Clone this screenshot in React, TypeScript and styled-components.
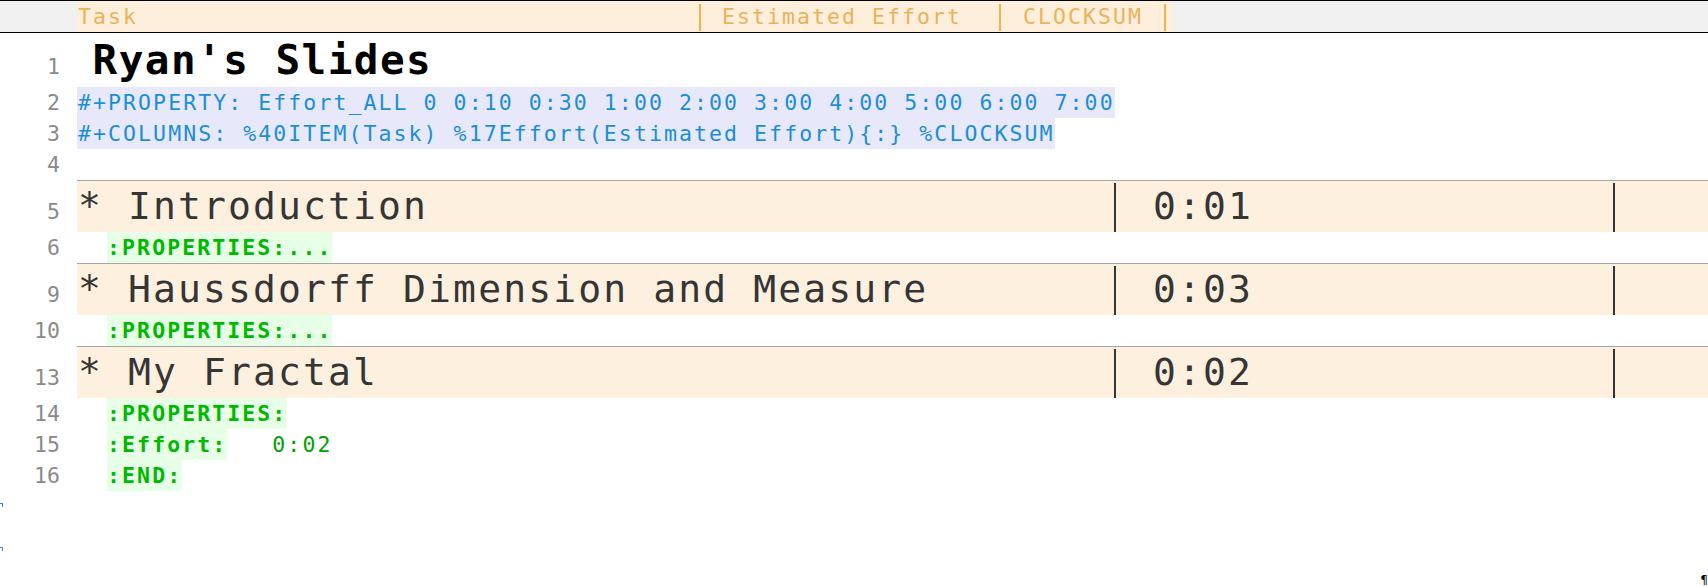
import React from "react";
import styled, { createGlobalStyle } from "styled-components";

const GlobalStyle = createGlobalStyle`
  html, body {
    margin: 0;
    padding: 0;
    background: #ffffff;
  }
  body {
    overflow: hidden;
    font-family: "DejaVu Sans Mono", "Liberation Mono", monospace;
  }
`;

const Page = styled.main`
  position: relative;
  width: 1708px;
  height: 586px;
  overflow: hidden;
  background: #ffffff;
`;

const HeaderBar = styled.header`
  display: flex;
  height: 31px;
  border-top: 1px solid #000;
  border-bottom: 1px solid #000;
  background: #f0f0f0;
  font-size: 21.5px;
  letter-spacing: 2.05px;
  line-height: 31px;
  color: #ebb25a;
`;

const HeaderGutter = styled.div`
  width: 77px;
  flex-shrink: 0;
`;

const HeaderCell = styled.div<{ $width: number; $pad: number }>`
  width: ${({ $width }) => $width}px;
  padding-left: ${({ $pad }) => $pad}px;
  box-sizing: border-box;
  flex-shrink: 0;
  background: #fdefdc;
  white-space: pre;
  overflow: hidden;
`;

const HeaderSep = styled.span`
  width: 2px;
  flex-shrink: 0;
  border-top: 3px solid #fdefdc;
  border-bottom: 1px solid #fdefdc;
  background: #f0b24e;
  background-clip: padding-box;
`;

const Line = styled.div`
  display: flex;
  align-items: baseline;
`;

const Num = styled.span`
  width: 77px;
  padding-right: 17px;
  box-sizing: border-box;
  flex-shrink: 0;
  text-align: right;
  font-size: 21.5px;
  line-height: 31px;
  color: #8a8a8a;
`;

const Body = styled.div`
  font-size: 21.5px;
  letter-spacing: 2.08px;
  line-height: 31px;
  white-space: pre;
  color: #333;
`;

const Title = styled.div`
  padding-left: 15.5px;
  font-size: 41px;
  font-weight: bold;
  letter-spacing: 1.45px;
  line-height: 54px;
  color: #000;
`;

const Keyword = styled.span`
  display: inline-block;
  padding-left: 1px;
  background: #e8e8fb;
  color: #1b8ed6;
`;

const Drawer = styled.span`
  display: inline-block;
  background: #e6ffe6;
  color: #00b800;
  font-weight: bold;
`;

const DrawerValue = styled.span`
  color: #00a000;
`;

const HeadBody = styled.div`
  flex: 1;
  display: flex;
  border-top: 1px solid #a6a6a6;
  background: #fdf0df;
  font-size: 38px;
  letter-spacing: 2.13px;
  line-height: 51px;
  color: #353535;
  white-space: pre;
`;

const HeadCell = styled.div<{ $width: number; $pad: number }>`
  width: ${({ $width }) => $width}px;
  padding-left: ${({ $pad }) => $pad}px;
  box-sizing: border-box;
  flex-shrink: 0;
  overflow: hidden;
`;

const HeadSep = styled.span`
  width: 2px;
  flex-shrink: 0;
  margin-top: 2px;
  background: #353535;
`;

const FringeRow = styled.div`
  height: 32px;
`;

const FringeMark = styled.span`
  display: block;
  width: 2px;
  height: 3px;
  margin-top: 12px;
  border-top: 1px solid #3f86d6;
  border-right: 1px solid #3f86d6;
`;

const Pilcrow = styled.span`
  position: absolute;
  right: 0;
  bottom: 0;
  font-family: "DejaVu Sans", sans-serif;
  font-size: 12px;
  line-height: 12px;
  color: #000;
`;

const headings = [
  { num: 5, drawer: 6, title: "* Introduction", value: "0:01" },
  { num: 9, drawer: 10, title: "* Haussdorff Dimension and Measure", value: "0:03" },
];

const Heading = ({ num, title, value }: { num: number; title: string; value: string }) => (
  <Line>
    <Num>{num}</Num>
    <HeadBody>
      <HeadCell $width={1037} $pad={1}>{title}</HeadCell>
      <HeadSep />
      <HeadCell $width={497} $pad={37}>{value}</HeadCell>
      <HeadSep />
    </HeadBody>
  </Line>
);

const App = () => {
  return (
    <Page>
      <GlobalStyle />
      <HeaderBar>
        <HeaderGutter />
        <HeaderCell $width={622} $pad={1}>Task</HeaderCell>
        <HeaderSep />
        <HeaderCell $width={298} $pad={21}>Estimated Effort</HeaderCell>
        <HeaderSep />
        <HeaderCell $width={163} $pad={22}>CLOCKSUM</HeaderCell>
        <HeaderSep />
        <HeaderCell $width={6} $pad={0} />
      </HeaderBar>

      <Line>
        <Num>1</Num>
        <Title>Ryan's Slides</Title>
      </Line>
      <Line>
        <Num>2</Num>
        <Body>
          <Keyword>{"#+PROPERTY: Effort_ALL 0 0:10 0:30 1:00 2:00 3:00 4:00 5:00 6:00 7:00"}</Keyword>
        </Body>
      </Line>
      <Line>
        <Num>3</Num>
        <Body>
          <Keyword>{"#+COLUMNS: %40ITEM(Task) %17Effort(Estimated Effort){:} %CLOCKSUM"}</Keyword>
        </Body>
      </Line>
      <Line>
        <Num>4</Num>
      </Line>

      {headings.map((h) => (
        <React.Fragment key={h.num}>
          <Heading num={h.num} title={h.title} value={h.value} />
          <Line>
            <Num>{h.drawer}</Num>
            <Body>
              {"  "}
              <Drawer>:PROPERTIES:...</Drawer>
            </Body>
          </Line>
        </React.Fragment>
      ))}

      <Heading num={13} title="* My Fractal" value="0:02" />
      <Line>
        <Num>14</Num>
        <Body>
          {"  "}
          <Drawer>:PROPERTIES:</Drawer>
        </Body>
      </Line>
      <Line>
        <Num>15</Num>
        <Body>
          {"  "}
          <Drawer>:Effort:</Drawer>
          <DrawerValue>{"   0:02"}</DrawerValue>
        </Body>
      </Line>
      <Line>
        <Num>16</Num>
        <Body>
          {"  "}
          <Drawer>:END:</Drawer>
        </Body>
      </Line>

      {[0, 1, 2].map((i) => (
        <FringeRow key={i}>
          <FringeMark />
        </FringeRow>
      ))}

      <Pilcrow>¶</Pilcrow>
    </Page>
  );
};

export default App;
